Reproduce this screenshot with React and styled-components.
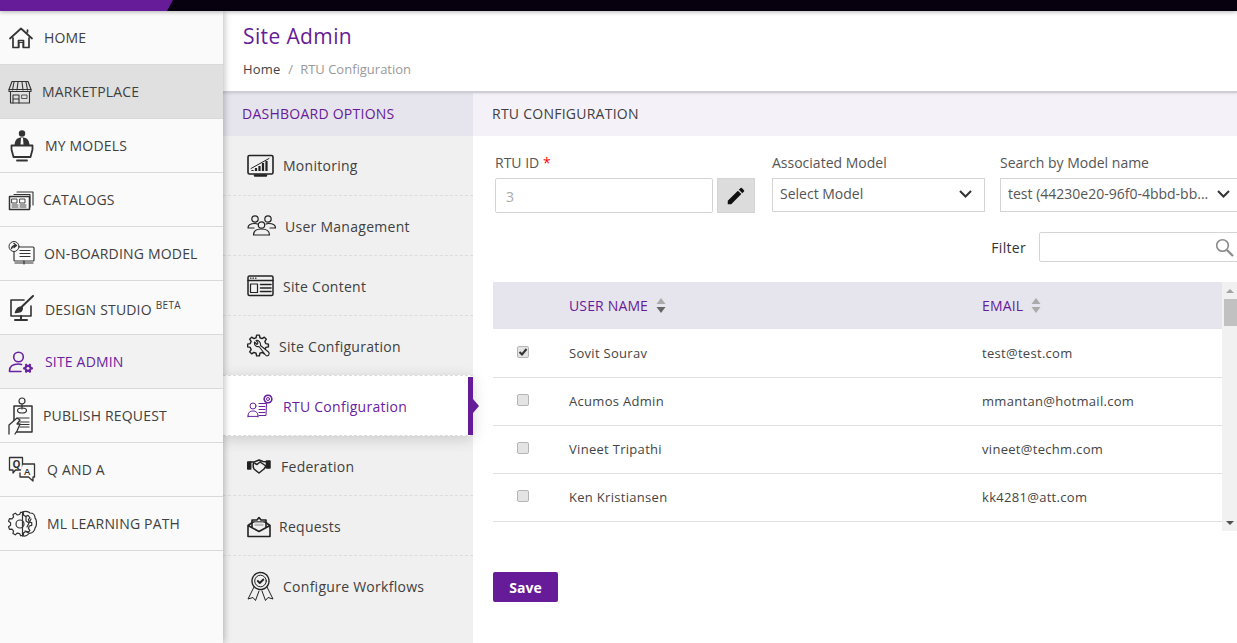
import React from "react";
import styled, { createGlobalStyle } from "styled-components";

const Global = createGlobalStyle`
  html, body { margin: 0; padding: 0; height: 100%; overflow: hidden; background: #fff; }
  body { font-family: "Open Sans", "Liberation Sans", sans-serif; color: #444; }
  * { box-sizing: border-box; }
`;

const Page = styled.div`
  width: 1237px; height: 643px; display: flex; flex-direction: column; overflow: hidden;
`;
const TopBar = styled.header`
  height: 11px; flex: none; background: #07010f; position: relative; z-index: 3;
  box-shadow: 0 1px 4px rgba(0,0,0,.3);
`;
const TopAccent = styled.div`
  width: 173px; height: 11px; background: #661b98;
  clip-path: polygon(0 0, 100% 0, 167px 100%, 0 100%);
`;
const Body = styled.div`display: flex; flex: 1; min-height: 0;`;
const Sidebar = styled.nav`
  width: 223px; flex: none; background: #fafafa; position: relative; z-index: 2;
  box-shadow: 1px 0 7px rgba(0,0,0,.28);
`;
const NavRow = styled.div`
  height: 54px; display: flex; align-items: center; padding: 1px 0 0 8px;
  border-bottom: 1px solid #d9d9d9;
  background: ${p => p.$state === "hover" ? "#e0e0e0" : p.$state === "active" ? "#f2f2f2" : "transparent"};
  color: ${p => p.$state === "active" ? "#6a22a0" : "#404040"};
  font-size: 14px; line-height: 20px; letter-spacing: .18px;
`;
const NavIcon = styled.span`
  width: ${p => p.$w}px; flex: none; display: flex; align-items: center;
  color: ${p => p.$active ? "#6a22a0" : "#333"};
  svg { display: block; }
`;
const NavLabel = styled.span`margin-top: ${p => p.$drop ? 3 : 0}px;`;
const Beta = styled.sup`font-size: 10px; line-height: 0; margin-left: 4px; letter-spacing: .3px; vertical-align: 6px;`;
const Main = styled.main`flex: 1; min-width: 0; display: flex; flex-direction: column;`;
const PageHead = styled.div`
  height: 82px; flex: none; background: #fff; padding: 11px 0 0 20px; position: relative;
  border-bottom: 2px solid #cfced6; box-shadow: 0 1px 2px rgba(0,0,0,.08);
`;
const Title = styled.h1`
  margin: 0; font-size: 21px; line-height: 28px; font-weight: 400; color: #661b98; letter-spacing: .38px;
`;
const Crumbs = styled.div`margin-top: 9px; font-size: 13px; line-height: 20px; color: #999;`;
const CrumbHome = styled.span`color: #444; letter-spacing: .15px;`;
const CrumbSep = styled.span`margin: 0 7px 0 8px; color: #999;`;
const Columns = styled.div`display: flex; flex: 1; min-height: 0;`;
const Options = styled.aside`width: 250px; flex: none; background: #f0f0f0;`;
const OptionsHead = styled.div`
  height: 43px; background: #e6e4ec; color: #661b98; font-size: 14px; line-height: 41px; padding-left: 19px; letter-spacing: .25px;
`;
const OptionRow = styled.div`
  height: 60px; display: flex; align-items: center; padding: 1px 0 0 24px;
  font-size: 14px; position: relative; letter-spacing: .27px;
  border-bottom: 1px dashed #dcdcdc;
  color: ${p => p.$active ? "#6a22a0" : "#404040"};
  background: ${p => p.$active ? "#fff" : "transparent"};
  ${p => p.$active ? "box-shadow: 0 3px 14px rgba(0,0,0,.16); z-index: 1; border-top: 1px dashed #dcdcdc; height: 61px; margin-top: -1px;" : ""}
  &:nth-child(2) { padding-top: 0; }
  &:last-child { border-bottom: 0; padding-top: 0; }
`;
const OptionIcon = styled.span`
  width: ${p => p.$w}px; flex: none; display: flex; align-items: center;
  color: ${p => p.$active ? "#6a22a0" : "#222"};
  svg { display: block; }
`;
const ActiveBar = styled.span`
  position: absolute; right: 0; top: 1px; bottom: 0; width: 5px; background: #661b98;
  &::after {
    content: ""; position: absolute; left: 5px; top: 22px;
    border-left: 6px solid #661b98; border-top: 7px solid transparent; border-bottom: 7px solid transparent;
  }
`;
const Panel = styled.section`flex: 1; min-width: 0; background: #fff; overflow: hidden;`;
const PanelHead = styled.div`
  height: 43px; background: #f4f2f8; font-size: 14px; line-height: 41px; padding-left: 19px; color: #404040; letter-spacing: .25px;
`;
const FormRow = styled.div`display: flex; padding: 17px 0 0 22px; width: 790px;`;
const Field = styled.div`width: ${p => p.$w}px; margin-right: ${p => p.$mr || 0}px; flex: none;`;
const Label = styled.div`font-size: 14px; line-height: 20px; color: #555; margin-bottom: 5px;`;
const Star = styled.span`color: #f00;`;
const InputGroup = styled.div`display: flex; gap: 4px;`;
const TextBox = styled.div`
  width: 218px; height: 35px; border: 1px solid #d4d4d4; border-radius: 2px; color: #aaa;
  font-size: 14px; line-height: 35px; padding-left: 10px;
`;
const EditBtn = styled.button`
  width: 38px; height: 35px; border: 1px solid #d4d4d4; background: #dcdcdc; padding: 0;
  display: flex; align-items: center; justify-content: center;
`;
const SelectBox = styled.div`
  height: 34px; border: 1px solid #d4d4d4; font-size: 14px; color: #555;
  display: flex; align-items: center; justify-content: space-between; padding: 0 ${p => p.$pr}px 3px 7px;
`;
const SelectText = styled.span`white-space: nowrap;`;
const FilterRow = styled.div`
  display: flex; align-items: center; justify-content: flex-end; width: 772px; margin-top: 19px; height: 30px;
`;
const FilterLabel = styled.span`font-size: 14px; color: #333; margin-right: 13px; letter-spacing: .3px; margin-top: 1px;`;
const FilterBox = styled.div`
  width: 206px; height: 30px; border: 1px solid #d4d4d4; border-radius: 2px; display: flex;
  align-items: center; padding-left: 175px;
`;
const TableArea = styled.div`display: flex; margin: 20px 0 0 20px; height: 249px;`;
const Table = styled.div`flex: 1; min-width: 0;`;
const HeadRow = styled.div`
  height: 47px; padding-bottom: 1px; background: #e6e4ec; display: grid; grid-template-columns: 76px 413px 1fr; align-items: center;
  color: #661b98; font-size: 14px; letter-spacing: .15px;
`;
const HeadCell = styled.div`display: flex; align-items: center; gap: 8px;`;
const DataRow = styled.div`
  height: 48px; padding-bottom: 1px; display: grid; grid-template-columns: 60px 16px 413px 1fr; align-items: center;
  border-bottom: 1px solid #e0e0e0; font-size: 13px; color: #444; letter-spacing: .3px;
  &:nth-child(2) { height: 49px; }
`;
const Check = styled.span`
  grid-column: 1; justify-self: start; margin: -2px 0 0 24px; width: 12px; height: 12px;
  border: 1px solid #b5b5b5; border-radius: 2px; background: #e4e4e4; display: flex;
  align-items: center; justify-content: center;
`;
const NameCell = styled.div`grid-column: 3; `;
const EmailCell = styled.div`grid-column: 4;`;
const Track = styled.div`
  width: 15px; flex: none; background: #f1f1f1; position: relative;
`;
const Arrow = styled.span`
  position: absolute; left: 4px; ${p => p.$down ? "bottom: 6px;" : "top: 7px;"}
  border-left: 4px solid transparent; border-right: 4px solid transparent;
  ${p => p.$down ? "border-top: 4px solid #505050;" : "border-bottom: 4px solid #a3a3a3;"}
`;
const Thumb = styled.span`
  position: absolute; left: 2px; right: 0; top: 17px; height: 27px; background: #c1c1c1;
`;
const Save = styled.button`
  margin: 41px 0 0 20px; width: 65px; height: 30px; background: #661b98; color: #fff; border: 0;
  border-radius: 2px; font: 700 14px "Open Sans", sans-serif; padding: 0; display: block;
`;

const gear = (cx, cy, r1, r2, n) => {
  const pts = [];
  for (let i = 0; i < n; i++) {
    const a = (i / n) * Math.PI * 2;
    const d = Math.PI / n;
    [[r1, a - d * .62], [r2, a - d * .34], [r2, a + d * .34], [r1, a + d * .62]].forEach(([r, t]) => {
      pts.push(`${(cx + r * Math.cos(t)).toFixed(2)} ${(cy + r * Math.sin(t)).toFixed(2)}`);
    });
  }
  return `M${pts.join("L")}Z`;
};

const S = ({ w = 28, h = 28, children, sw = 1.4 }) => (
  <svg width={w} height={h} viewBox={`0 0 ${w} ${h}`} fill="none" stroke="currentColor" strokeWidth={sw} strokeLinejoin="round" strokeLinecap="round">{children}</svg>
);

const IHome = () => <S w={26} h={24} sw={1.7}><path d="M2 12.5 13 2.5l11 10M5 12v9.500h5.500v-7h5v7H21V12M19.500 6V4" /><path d="M11 21.500v-5h4v5" strokeWidth="1" /></S>;
const IShop = () => <S w={24} h={24} sw={1.1}><path d="M4 1.500h16l3 8v2H1v-2zM2.500 12v11h19V12" /><path d="M6 2 4.500 10M10 2l-1 8M14 2l1 8M18 2l1.500 8M1 9.500h22" /><path d="M5 23v-8h6v8M5 19h6" /><rect x="14" y="15" width="5" height="3.500" strokeWidth=".8" /></S>;
const IModels = () => <S w={26} h={32} sw={1.5}><circle cx="14" cy="3.500" r="3.200" fill="currentColor" stroke="none" /><path d="M6.500 16c0-6 2.500-8.500 7.500-8.500s7.500 2.500 7.500 8.500z" fill="currentColor" stroke="none" /><path d="M13 8h2l.5 7h-3z" fill="#fafafa" stroke="none" /><path d="M3.500 15.500h21v4l-2 7.500H5.500l-2-7.500z" fill="#fafafa" strokeWidth="1.800" /><path d="M9 30.500h10" strokeWidth="1.800" /></S>;
const ICatalog = () => <S w={26} h={22} sw={1.100}><path d="M9 3h16v13M6 5.500h16V18" /><rect x="1.500" y="7.500" width="20" height="13" fill="#fafafa" strokeWidth="1.500" /><rect x="4" y="10" width="5" height="4" strokeWidth=".9" /><rect x="12" y="10" width="5" height="4" strokeWidth=".9" /><path d="M4 16h6M4 18h6M12 16h6M12 18h6" strokeWidth=".9" /></S>;
const IBoard = () => <S w={28} h={26} sw={1.200}><rect x="6" y="6" width="20" height="14" rx="1" /><path d="M12 9.500h10M12 12.500h10M12 15.500h10M7 22h18M16 20v3" /><circle cx="6" cy="5.500" r="5" fill="#fafafa" strokeWidth="1" /><path d="M3.500 7.500c.5-2 2-3 4-3M6 2.500l2.500 2-2.500 2" strokeWidth="1.400" /></S>;
const IDesign = () => <S w={26} h={26} sw={1.600}><path d="M16 5H3v16h20V11" /><path d="M7 25h12M13 21v4" strokeWidth="2" /><path d="M25 1 14 11.500" strokeWidth="2" /><path d="M7.500 17.500c1-3 3-6 6.500-5.500 .8 1.800-.5 4.200-2 4.700z" fill="currentColor" /></S>;
const IAdmin = () => <S w={26} h={22} sw={1.600}><circle cx="10.500" cy="6" r="4.800" /><path d="M1.500 20c0-5 3.500-7 9-7 1.200 0 2 .1 3 .4M1.500 20.500H13" /><path d={gear(20, 17.300, 3.700, 5, 6)} fill="currentColor" stroke="none" /><circle cx="20" cy="17.300" r="1.400" fill="#f2f2f2" stroke="none" /></S>;
const IPublish = () => <S w={26} h={38} sw={1.200}><rect x="6" y="9" width="18" height="26" strokeWidth="1.500" /><circle cx="14" cy="4" r="3" /><path d="M14 7v5" /><ellipse cx="14" cy="13.500" rx="4.500" ry="2.500" /><path d="M10 21h11M12 25h9M12 27.500h9M12 30h9" /><path d="M1 37V28l8-7 3 2-3 4h3l-3 7-2 3" fill="#fafafa" strokeWidth="1.300" /></S>;
const IQA = () => <S w={28} h={28} sw={1.300}><path d="M1.500 1.500h13v12.500H7.500L5 17v-3H1.500z" /><path d="M15 8h11.500v13H25v4l-4.500-4H12v-4" fill="#fafafa" /><text x="4.500" y="11.500" fontSize="10" fontWeight="700" fill="currentColor" stroke="none" fontFamily="Open Sans">Q</text><text x="16" y="18.500" fontSize="9.500" fontWeight="600" fill="currentColor" stroke="none" fontFamily="Open Sans">A</text></S>;
const IBrain = () => <S w={29} h={28} sw={1.200}><path d="M14 2.500c2-1.500 6-1.500 8 .5 3 0 5 2 5 5 2 2 2 8 0 10 0 3-3 5.500-6 5.500-2 2.500-5 3-7 2z" /><path d={gear(12, 14, 9.500, 11.800, 9)} fill="#fafafa" /><circle cx="12" cy="14" r="4" /><path d="M14.500 2v24M18 6v5l3 2M23 9l-4 8M17 21l4 1" /></S>;

const IMonitor = () => <S w={28} h={24} sw={1.300}><rect x="1" y="1.500" width="25" height="18.500" rx="1.500" strokeWidth="1.600" /><path d="M8 21.500h11" strokeWidth="2.500" /><path d="M4 14.500 13 9.500l9-5" strokeWidth="1" /><path d="M5.500 17v-1M9 17v-3M12.500 17v-5M16 17V9M19.500 17V7" strokeWidth="2.200" strokeLinecap="butt" /></S>;
const IUsers = () => <S w={30} h={24} sw={1.200}><circle cx="8" cy="5" r="3.200" /><circle cx="21" cy="5" r="3.200" /><circle cx="14.500" cy="11" r="3.200" /><path d="M1 14c0-3 3-4.500 7-4.500 1 0 2 .2 2.500.5M28.500 14c0-3-3-4.500-7-4.500-1 0-2 .2-2.500.5M1 14h6M23 14h5.500M6.500 21c0-4 3.500-6 8-6s8 2 8 6z" /></S>;
const IContent = () => <S w={27} h={22} sw={1.500}><rect x="1" y="1" width="25" height="19.500" rx="1.500" /><path d="M1 5.500h25" /><path d="M3.500 3.200h.5M6 3.200h.5M8.500 3.200h.5" strokeWidth="1.200" /><rect x="3.500" y="9" width="7" height="8.500" strokeWidth="1.200" /><path d="M13.500 9.500H24M13.500 13H24M13.500 16.500H24" strokeWidth="1.600" /></S>;
const IConfig = () => <S w={23} h={25} sw={1.400}><path d={gear(11, 11.500, 8, 10.500, 8)} /><path d="M7.500 8c-.5 3 1.500 5 4.500 4.500l6.500 8.500c1 1.500 3.500 1 3.500-1 .3-1 0-1.500-.5-2l-8-6.500c.5-3-2-5.500-4.500-5l2 2.500-1 1.500z" fill="#f0f0f0" strokeWidth="1.100" /></S>;
const IRtu = () => <S w={27} h={24} sw={1}><circle cx="6" cy="12" r="3" /><path d="M1 22c0-3.500 2-5 5-5s5 1.500 5 5zM1 22v1M11 22v1" /><path d="M12 9.500h7.500l-.5 12h-7M12 12.500h6M12 15.500h6M12 18.500h6" /><circle cx="21" cy="5" r="3.800" strokeDasharray="1.500 .7" strokeWidth="1.600" /><circle cx="21" cy="5" r="1.500" /></S>;
const IHands = () => <S w={24} h={16} sw={1.500}><path d="M3 4h4l5-2 4 1.500L21 4M7 4c-1 2-1 5 0 7l5 4 5-4 2-3-6-4-3 2.500-2-1" /><rect x=".7" y="4" width="3" height="7" fill="currentColor" /><rect x="19.500" y="3" width="3.500" height="7" fill="currentColor" /></S>;
const IMail = () => <S w={24} h={23} sw={1.600}><path d="M1 10.500 6 7h12l5 3.500V21.500H1zM1 10.500l11 6 11-6" /><path d="M5 12V5h5l2-2.500L14 5h5v7" /><path d="M8 7.500h8M8 10h8" stroke="#aaa" strokeWidth="1.300" /></S>;
const IAward = () => <S w={27} h={30} sw={1}><circle cx="13.500" cy="10" r="8.500" strokeDasharray="1.500 .7" strokeWidth="1.400" /><circle cx="13.500" cy="10" r="5.800" /><path d="m10.800 10 2 2 3.500-3.500" strokeWidth="1.800" /><path d="M7 16 1 28l5-1.500 2.500 3L12 20M20 16l6 12-5-1.500-2.500 3L15 20" /></S>;

const nav = [
  ["HOME", IHome, 36],
  ["MARKETPLACE", IShop, 34, "hover"],
  ["MY MODELS", IModels, 37],
  ["CATALOGS", ICatalog, 35],
  ["ON-BOARDING MODEL", IBoard, 36],
  ["DESIGN STUDIO", IDesign, 37, null, true],
  ["SITE ADMIN", IAdmin, 37, "active"],
  ["PUBLISH REQUEST", IPublish, 35],
  ["Q AND A", IQA, 39],
  ["ML LEARNING PATH", IBrain, 39],
];
const options = [
  ["Monitoring", IMonitor, 36],
  ["User Management", IUsers, 38],
  ["Site Content", IContent, 36],
  ["Site Configuration", IConfig, 32],
  ["RTU Configuration", IRtu, 36, true],
  ["Federation", IHands, 34],
  ["Requests", IMail, 32],
  ["Configure Workflows", IAward, 36],
];
const users = [
  ["Sovit Sourav", "test@test.com", true],
  ["Acumos Admin", "mmantan@hotmail.com"],
  ["Vineet Tripathi", "vineet@techm.com"],
  ["Ken Kristiansen", "kk4281@att.com"],
];

const Chevron = () => (
  <svg width="13" height="8" viewBox="0 0 13 8" fill="none" stroke="#333" strokeWidth="2"><path d="M1 1l5.500 5.500L12 1" /></svg>
);
const Sort = ({ low }) => (
  <svg width="10" height="15" viewBox="0 0 10 15"><path d="M5 0l4.500 6H.5z" fill="#aaa" /><path d="M5 15 .5 9h9z" fill={low} /></svg>
);

export default function App() {
  return (
    <Page>
      <Global />
      <TopBar><TopAccent /></TopBar>
      <Body>
        <Sidebar>
          {nav.map(([label, Icon, w, state, beta]) => (
            <NavRow key={label} $state={state}>
              <NavIcon $w={w} $active={state === "active"}><Icon /></NavIcon>
              <NavLabel $drop={beta}>{label}{beta && <Beta>BETA</Beta>}</NavLabel>
            </NavRow>
          ))}
        </Sidebar>
        <Main>
          <PageHead>
            <Title>Site Admin</Title>
            <Crumbs><CrumbHome>Home</CrumbHome><CrumbSep>/</CrumbSep>RTU Configuration</Crumbs>
          </PageHead>
          <Columns>
            <Options>
              <OptionsHead>DASHBOARD OPTIONS</OptionsHead>
              {options.map(([label, Icon, w, active]) => (
                <OptionRow key={label} $active={active}>
                  <OptionIcon $w={w} $active={active}><Icon /></OptionIcon>
                  <span>{label}</span>
                  {active && <ActiveBar />}
                </OptionRow>
              ))}
            </Options>
            <Panel>
              <PanelHead>RTU CONFIGURATION</PanelHead>
              <FormRow>
                <Field $w={260} $mr={17}>
                  <Label>RTU ID <Star>*</Star></Label>
                  <InputGroup>
                    <TextBox>3</TextBox>
                    <EditBtn aria-label="edit">
                      <svg width="22" height="22" viewBox="0 0 24 24" fill="#111"><path d="M3 17.250V21h3.750L17.810 9.940l-3.750-3.750L3 17.250zM20.710 7.040a1 1 0 0 0 0-1.410l-2.340-2.340a1 1 0 0 0-1.410 0l-1.830 1.830 3.750 3.750 1.830-1.830z" /></svg>
                    </EditBtn>
                  </InputGroup>
                </Field>
                <Field $w={213} $mr={15}>
                  <Label>Associated Model</Label>
                  <SelectBox $pr={12}><SelectText>Select Model</SelectText><Chevron /></SelectBox>
                </Field>
                <Field $w={245}>
                  <Label>Search by Model name</Label>
                  <SelectBox $pr={14}><SelectText>test (44230e20-96f0-4bbd-bb...</SelectText><Chevron /></SelectBox>
                </Field>
              </FormRow>
              <FilterRow>
                <FilterLabel>Filter</FilterLabel>
                <FilterBox>
                  <svg width="19" height="19" viewBox="0 0 19 19" fill="none" stroke="#8a8a8a" strokeWidth="1.600"><circle cx="7.500" cy="7.500" r="5.800" /><path d="m12 12 6 6" strokeWidth="2.200" /></svg>
                </FilterBox>
              </FilterRow>
              <TableArea>
                <Table>
                  <HeadRow>
                    <span />
                    <HeadCell>USER NAME <Sort low="#666" /></HeadCell>
                    <HeadCell>EMAIL <Sort low="#aaa" /></HeadCell>
                  </HeadRow>
                  {users.map(([name, email, checked]) => (
                    <DataRow key={email}>
                      <Check>
                        {checked && <svg width="10" height="10" viewBox="0 0 10 10" fill="none" stroke="#333" strokeWidth="2"><path d="m1.500 5 2.500 2.500L8.500 2" /></svg>}
                      </Check>
                      <NameCell>{name}</NameCell>
                      <EmailCell>{email}</EmailCell>
                    </DataRow>
                  ))}
                </Table>
                <Track>
                  <Arrow />
                  <Thumb />
                  <Arrow $down />
                </Track>
              </TableArea>
              <Save>Save</Save>
            </Panel>
          </Columns>
        </Main>
      </Body>
    </Page>
  );
}
